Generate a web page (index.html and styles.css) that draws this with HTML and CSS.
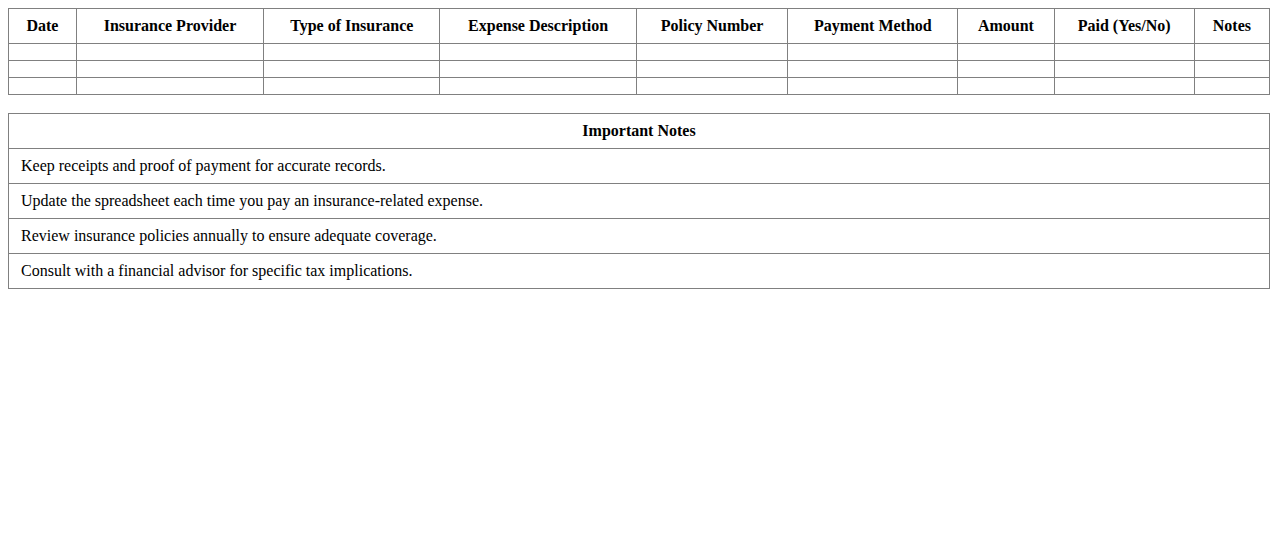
FILE: index.html
```html
<!DOCTYPE html>
<html>
<head>
<meta charset="utf-8">
<title>Insurance Expenses</title>
<link rel="stylesheet" href="styles.css">
</head>
<body>
<table class="grid">
  <thead>
    <tr>
      <th>Date</th>
      <th>Insurance Provider</th>
      <th>Type of Insurance</th>
      <th>Expense Description</th>
      <th>Policy Number</th>
      <th>Payment Method</th>
      <th>Amount</th>
      <th>Paid (Yes/No)</th>
      <th>Notes</th>
    </tr>
  </thead>
  <tbody>
    <tr><td></td><td></td><td></td><td></td><td></td><td></td><td></td><td></td><td></td></tr>
    <tr><td></td><td></td><td></td><td></td><td></td><td></td><td></td><td></td><td></td></tr>
    <tr><td></td><td></td><td></td><td></td><td></td><td></td><td></td><td></td><td></td></tr>
  </tbody>
</table>
<table class="notes">
  <thead>
    <tr><th>Important Notes</th></tr>
  </thead>
  <tbody>
    <tr><td>Keep receipts and proof of payment for accurate records.</td></tr>
    <tr><td>Update the spreadsheet each time you pay an insurance-related expense.</td></tr>
    <tr><td>Review insurance policies annually to ensure adequate coverage.</td></tr>
    <tr><td>Consult with a financial advisor for specific tax implications.</td></tr>
  </tbody>
</table>
</body>
</html>
```
FILE: styles.css
```css
body {
  margin: 8px;
  font-family: "Liberation Serif", "Times New Roman", serif;
  font-size: 16px;
  color: #000;
  background: #fff;
}
table {
  width: 100%;
  border-collapse: collapse;
}
th, td {
  border: 1px solid #808080;
  padding: 8px 12px;
  line-height: 18px;
}
th {
  font-weight: bold;
  text-align: center;
}
.notes {
  margin-top: 18px;
}
.notes td {
  text-align: left;
}
```
